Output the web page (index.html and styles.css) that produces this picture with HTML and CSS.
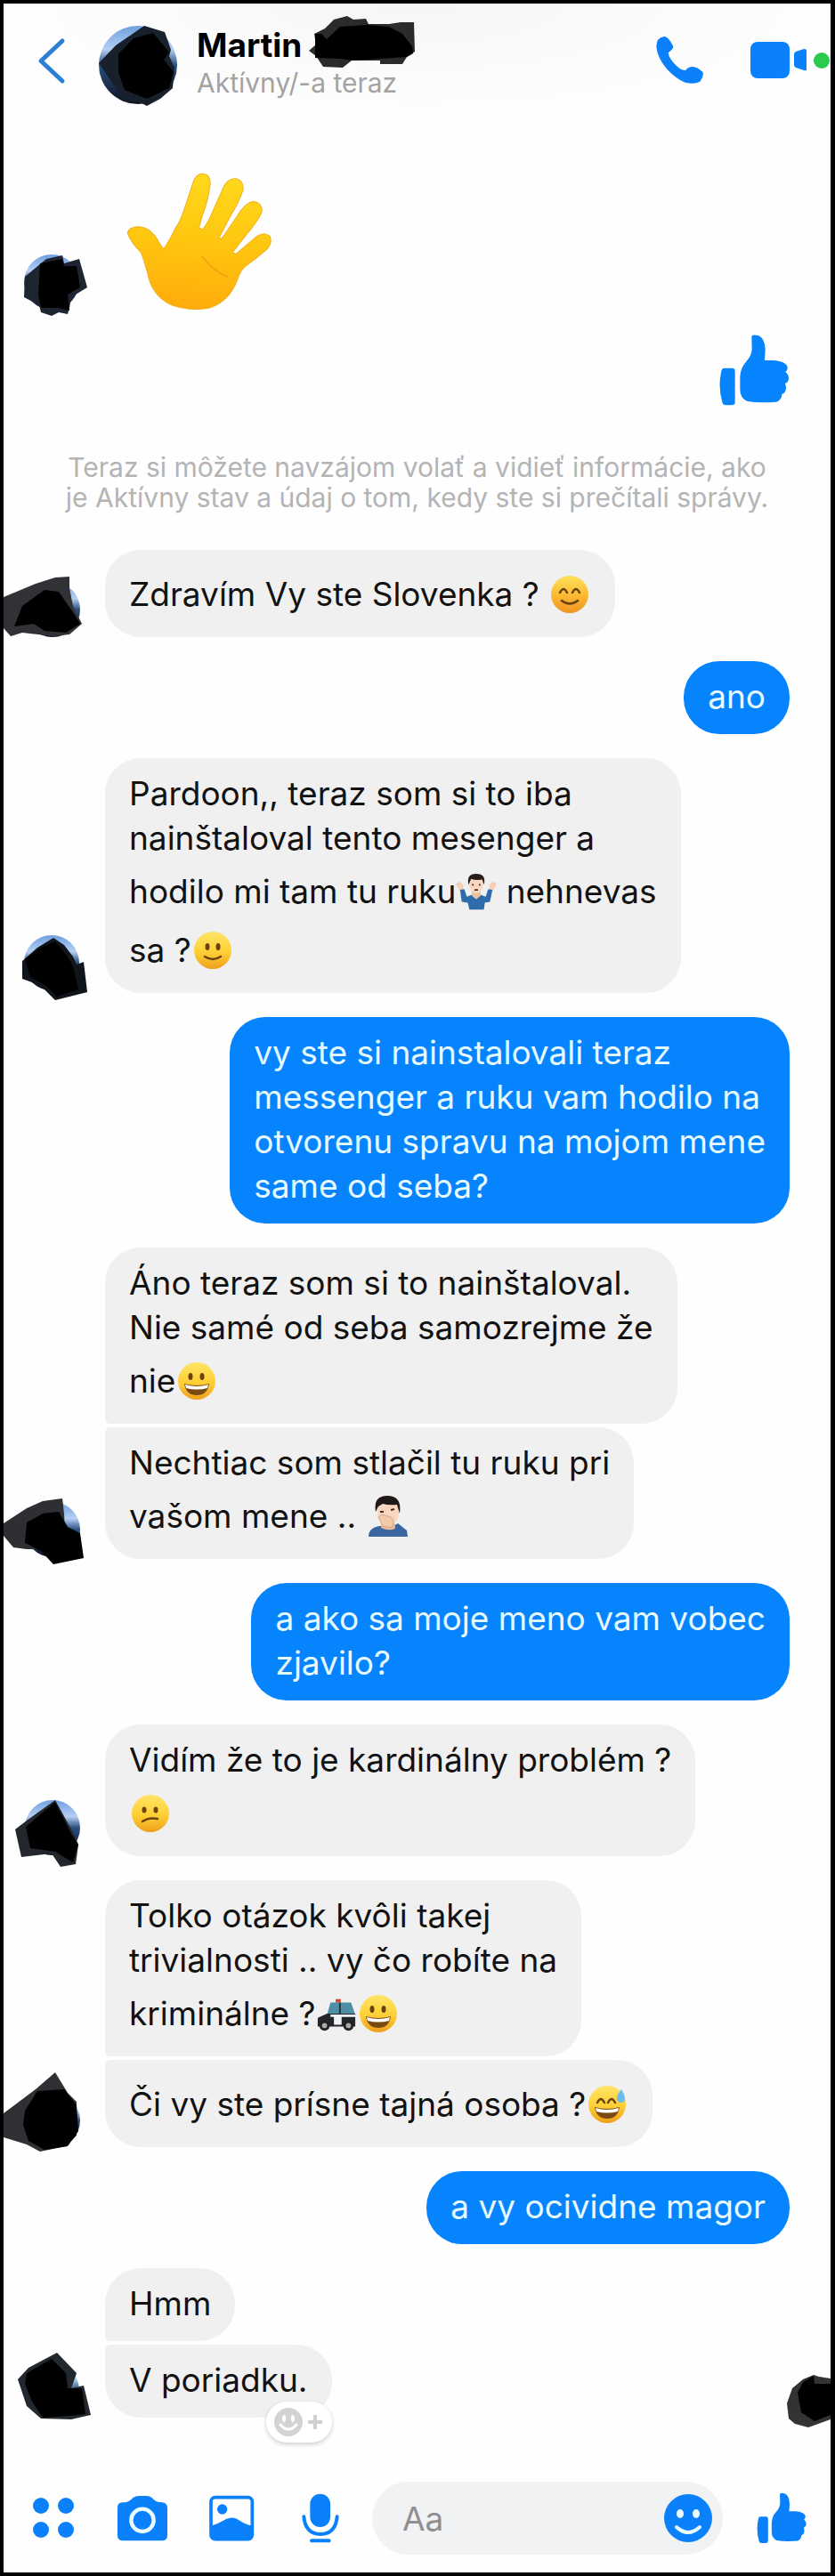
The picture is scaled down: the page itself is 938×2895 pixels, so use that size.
FILE: index.html
```html
<!DOCTYPE html>
<html lang="sk">
<head>
<meta charset="utf-8">
<meta name="viewport" content="width=device-width, initial-scale=1">
<title>Martin</title>
<link rel="stylesheet" href="styles.css">
</head>
<body>
<svg class="defs" aria-hidden="true">
  <defs>
    <linearGradient id="sky" x1="0" y1="0" x2="0" y2="1"><stop offset="0" stop-color="#6f9fe0"/><stop offset=".3" stop-color="#b5d0f2"/><stop offset=".5" stop-color="#2c4f80"/><stop offset="1" stop-color="#0c1220"/></linearGradient>
    <linearGradient id="skin" x1=".5" y1="0" x2=".4" y2="1"><stop offset="0" stop-color="#ffd91c"/><stop offset=".5" stop-color="#ffc60f"/><stop offset="1" stop-color="#ffab0c"/></linearGradient>
    <linearGradient id="face" x1="0" y1="0" x2="0" y2="1"><stop offset="0" stop-color="#ffe566"/><stop offset=".55" stop-color="#ffcf35"/><stop offset="1" stop-color="#eda01c"/></linearGradient>
    <linearGradient id="blush" x1="0" y1="0" x2="0" y2="1"><stop offset="0" stop-color="#ffe05a"/><stop offset=".5" stop-color="#fdbb35"/><stop offset="1" stop-color="#ee9420"/></linearGradient>
  </defs>
  <symbol id="like" viewBox="1014 1130 236 240">
    <path d="M1032 1243H1058Q1068 1243 1068 1253V1358Q1068 1368 1058 1368H1036Q1028 1368 1025 1358Q1010 1305 1022 1253Q1024 1243 1032 1243Z"/>
    <path d="M1124 1135Q1130 1128 1148 1134Q1168 1142 1170 1180L1168 1217H1200Q1245 1222 1245 1243Q1245 1252 1238 1256Q1250 1266 1249 1280Q1247 1292 1237 1295Q1242 1310 1238 1320Q1234 1330 1226 1331Q1226 1350 1208 1357Q1150 1362 1110 1355Q1085 1345 1085 1315V1270Q1088 1240 1105 1222Q1124 1200 1125 1180Z"/>
  </symbol>
  <symbol id="e-grin" viewBox="0 0 42 42">
    <circle cx="21" cy="21" r="21" fill="url(#face)"/>
    <ellipse cx="14" cy="16" rx="2.5" ry="4" fill="#6b4310"/><ellipse cx="27" cy="16" rx="2.5" ry="4" fill="#6b4310"/>
    <path d="M7 24Q21 28 35 24Q33 37 21 37Q9 37 7 24Z" fill="#7a4a12"/><path d="M8 25Q21 29 34 25L33 29Q21 32 9 29Z" fill="#fff"/>
  </symbol>
</svg>

<div class="app">
  <header class="header">
    <button class="icon-btn back" aria-label="Späť"><svg width="34" height="56" viewBox="41 41 34 56"><path d="M70 47 46 69.500 70 92" fill="none" stroke="#2b80d6" stroke-width="5" stroke-linecap="round" stroke-linejoin="round"/></svg></button>
    <svg class="photo" width="90" height="92" viewBox="111 27 90 92" role="img" aria-label="Martin">
      <circle cx="155" cy="72" r="44" fill="url(#sky)"/>
      <path fill="#18202b" d="M111 70 130 50 162 28 185 35 192 55 190 62 196 75 194 98 180 110 165 118 155 113 140 113 126 92Z"/>
      <path fill="#000" d="M133 60 150 42 172 36 182 48 190 58 184 66 195 80 190 98 165 110 140 100 133 80Z"/>
    </svg>
    <div class="who">
      <h1 class="name">Martin
        <svg class="scribble" width="119" height="58" viewBox="350 18 119 58" aria-hidden="true"><path fill="#2b2b2b" d="M350 57 358 50 356 38 368 32 378 22 393 18 400 22 414 21 417 27 440 27 453 25 468 25 469 58 460 64 455 72 430 72 430 68 398 68 388 76 366 75 358 63Z"/><path fill="#000" d="M357 38 364 38 370 44 385 30 415 28 440 30 455 38 466 52 467 60 460 64 430 66 400 68 384 66 357 65Z"/></svg>
      </h1>
      <p class="status">Aktívny/-a teraz</p>
    </div>
    <button class="icon-btn call" aria-label="Zavolať"><svg width="54" height="54" viewBox="807 129 162 162"><path fill="currentColor" d="M834 129Q850 130 865 163Q865 172 848 184Q850 205 880 232Q895 245 907 243Q912 232 931 231Q945 231 965 250Q968 265 955 281Q935 292 905 284Q870 270 840 235Q812 200 808 165Q808 132 834 129Z"/></svg></button>
    <button class="icon-btn" aria-label="Videohovor"><svg width="64" height="42" viewBox="843 49 64 42" fill="currentColor"><rect x="843" y="49" width="44" height="41" rx="8"/><path d="M892 63Q892 61 894 60L903 57Q906 57 906 59V80Q906 82 903 81L894 78Q892 77 892 75Z"/></svg></button>
    <span class="online"></span>
  </header>

  <main class="chat">
    <div class="row first">
      <svg class="avatar" viewBox="4 248 110 100" aria-hidden="true"><circle cx="58" cy="316" r="31" fill="url(#sky)"/><path fill="#1c2530" d="M27 333 28 310 52 290 70 286 72 295 89 290 98 322 80 333 78 345 76 352 66 350 58 354 46 350 44 342Z"/><path d="M45 295 70 290 72 298 86 298 90 322 76 330 78 348 66 345 46 345 43 330Z"/></svg>
      <svg class="wave" viewBox="429 585 485 460" role="img" aria-label="👋"><path fill="url(#skin)" stroke="#f0b020" stroke-width="3" d="M430 785Q432 765 465 763Q510 765 535 815L550 838Q560 830 590 770Q610 740 622 700L652 610Q662 583 685 585Q710 590 708 620Q700 680 680 730L670 768L683 772Q700 750 715 715Q735 670 755 625Q770 600 795 602Q822 610 818 640Q805 680 780 720L738 800L745 805Q770 770 800 725Q825 685 850 679Q880 680 882 708Q880 725 850 765Q820 800 783 850L795 855Q830 825 865 795Q890 780 908 795Q918 815 900 838Q870 865 835 890Q810 905 800 940Q770 1020 700 1038Q640 1048 580 1028Q520 1000 502 940Q490 890 475 850Q440 815 430 785Z"/><path d="M682 865Q715 910 765 932" fill="none" stroke="#f3a60f" stroke-width="6" stroke-linecap="round"/></svg>
    </div>
    <div class="row out like-row"><svg class="like-big" role="img" aria-label="Páči sa mi to"><use href="#like"/></svg></div>

    <p class="notice">Teraz si môžete navzájom volať a vidieť informácie, ako<br>je Aktívny stav a údaj o tom, kedy ste si prečítali správy.</p>

    <div class="row">
      <svg class="avatar" viewBox="4 615 110 100" aria-hidden="true"><circle cx="59" cy="684" r="31" fill="url(#sky)"/><path fill="#303236" d="M4 670 40 655 62 648 78 647 78 660 82 680 92 700 78 712 60 714 25 710 12 714 4 705Z"/><path d="M25 680 50 662 66 664 84 690 90 700 74 710 50 708 38 700 16 703Z"/></svg>
      <div class="stack"><p class="bubble">Zdravím Vy ste Slovenka ? <svg class="emoji" viewBox="0 0 42 42" role="img" aria-label="😊"><circle cx="21" cy="21" r="21" fill="url(#blush)"/><path d="M10 19Q14 11 18 19M24 19Q28 11 32 19M12 28Q21 35 30 28" fill="none" stroke="#6b4310" stroke-width="2.500" stroke-linecap="round"/></svg></p></div>
    </div>

    <div class="row out"><p class="bubble mine">ano</p></div>

    <div class="row">
      <svg class="avatar" viewBox="4 1016 110 100" aria-hidden="true"><circle cx="58" cy="1082" r="31" fill="url(#sky)"/><path fill="#10151c" d="M25 1080 42 1065 60 1054 72 1062 82 1075 86 1084 94 1081 98 1115 62 1124 50 1112 36 1104 25 1100Z"/><path d="M28 1078 46 1065 62 1058 76 1075 82 1086 88 1112 64 1120 52 1108 34 1098Z"/></svg>
      <div class="stack"><p class="bubble">Pardoon,, teraz som si to iba<br>nainštaloval tento mesenger a<br>hodilo mi tam tu ruku<svg class="emoji wide" viewBox="0 0 48 42" role="img" aria-label="🤷🏻‍♂️"><path d="M5 20 1 12 4 10 8 13 8 19M43 20 47 12 44 10 40 13 40 19" fill="#f6d2ba" stroke="#f0c3a6"/><path d="M5 19 10 18 13 27Q24 21 35 27L38 18 43 19 40 33 34 34 33 42H16L14 34 7 33Z" fill="#2f6cab"/><path d="M19 19H29V26L24 30 19 26Z" fill="#eec0a2"/><ellipse cx="24" cy="13" rx="8" ry="10" fill="#f8d8c2"/><path d="M15 13Q12 0 24 0Q36 0 33 13L31 7Q23 8 18 6Z" fill="#2b1d18"/><path d="M20 12V14M28 12V14M22 19H26" stroke="#4a2b20" stroke-width="2"/></svg> nehnevas<br>sa ?<svg class="emoji" viewBox="0 0 42 42" role="img" aria-label="🙂"><circle cx="21" cy="21" r="21" fill="url(#face)"/><ellipse cx="15" cy="17" rx="2.500" ry="4" fill="#6b4310"/><ellipse cx="27" cy="17" rx="2.500" ry="4" fill="#6b4310"/><path d="M12 28Q21 34 30 28" fill="none" stroke="#6b4310" stroke-width="2.500" stroke-linecap="round"/></svg></p></div>
    </div>

    <div class="row out"><p class="bubble mine">vy ste si nainstalovali teraz<br>messenger a ruku vam hodilo na<br>otvorenu spravu na mojom mene<br>same od seba?</p></div>

    <div class="row">
      <svg class="avatar" viewBox="4 1651 110 100" aria-hidden="true"><circle cx="59" cy="1718" r="31" fill="url(#sky)"/><path fill="#2d2f33" d="M4 1711 30 1694 48 1686 70 1683 72 1700 74 1740 30 1740 15 1738 4 1725Z"/><path d="M30 1710 48 1700 66 1698 76 1715 90 1722 94 1750 60 1757 46 1742 28 1733Z"/></svg>
      <div class="stack">
        <p class="bubble">Áno teraz som si to nainštaloval.<br>Nie samé od seba samozrejme že<br>nie<svg class="emoji" role="img" aria-label="😀"><use href="#e-grin"/></svg></p>
        <p class="bubble">Nechtiac som stlačil tu ruku pri<br>vašom mene .. <svg class="emoji tall" viewBox="0 0 46 46" role="img" aria-label="🤦🏻‍♂️"><path d="M1 46Q1 36 13 34L29 34 34 31 44 39 45 46Z" fill="#3a67a0"/><path d="M16 27H30L31 37Q23 40 15 36Z" fill="#e9b999"/><ellipse cx="23" cy="18" rx="12" ry="16" fill="#f7d7bf"/><path d="M9 18Q6 0 22 0Q39 0 36 20L33 10Q24 11 17 9L12 12Z" fill="#211917"/><path d="M14 18H18M26 16 30 15" stroke="#4a2b20" stroke-width="2"/><path d="M12 24 16 21 26 24Q32 29 26 36L17 34Z" fill="#f3c9ac" stroke="#d9a585"/></svg></p>
      </div>
    </div>

    <div class="row out"><p class="bubble mine">a ako sa moje meno vam vobec<br>zjavilo?</p></div>

    <div class="row">
      <svg class="avatar" viewBox="4 1985 110 100" aria-hidden="true"><circle cx="59" cy="2053" r="31" fill="url(#sky)"/><path fill="#23272d" d="M17 2055 30 2045 62 2022 84 2062 88 2072 85 2094 68 2097 58 2082 24 2086Z"/><path d="M29 2052 62 2024 80 2060 88 2072 82 2092 62 2080 34 2076Z"/></svg>
      <div class="stack"><p class="bubble">Vidím že to je kardinálny problém ?<br><svg class="emoji" viewBox="0 0 42 42" role="img" aria-label="😕"><circle cx="21" cy="21" r="21" fill="url(#face)"/><ellipse cx="14" cy="17" rx="2.500" ry="3.500" fill="#6b4310"/><ellipse cx="27" cy="17" rx="2.500" ry="3.500" fill="#6b4310"/><path d="M12 30Q19 25 29 27" fill="none" stroke="#6b4310" stroke-width="2.500" stroke-linecap="round"/></svg></p></div>
    </div>

    <div class="row">
      <svg class="avatar" viewBox="4 2313 110 100" aria-hidden="true"><circle cx="59" cy="2383" r="31" fill="url(#sky)"/><path fill="#2f3033" d="M4 2375 40 2348 62 2329 76 2352 86 2362 86 2400 74 2412 45 2418 30 2410 4 2402Z"/><path d="M28 2372 42 2350 72 2348 86 2366 88 2395 76 2412 50 2416 32 2406 26 2388Z"/></svg>
      <div class="stack">
        <p class="bubble">Tolko otázok kvôli takej<br>trivialnosti .. vy čo robíte na<br>kriminálne ?<svg class="emoji wide" viewBox="0 0 48 42" role="img" aria-label="🚓"><path d="M23 4H29V8H23Z" fill="#d8402f"/><path d="M13 22 17 8H41L46 22Z" fill="#4f8fa5"/><path d="M28 8V22" stroke="#24333a" stroke-width="2"/><path d="M2 26 13 21H46V36H2Z" fill="#23262b"/><path d="M17 22H46V25H17ZM21 25H30V34H21Z" fill="#f1f3f5"/><circle cx="10" cy="35" r="6" fill="#222"/><circle cx="10" cy="35" r="3" fill="#aaa"/><circle cx="38" cy="35" r="6" fill="#222"/><circle cx="38" cy="35" r="3" fill="#aaa"/></svg><svg class="emoji" role="img" aria-label="😀"><use href="#e-grin"/></svg></p>
        <p class="bubble">Či vy ste prísne tajná osoba ?<svg class="emoji" viewBox="0 0 42 42" role="img" aria-label="😅"><circle cx="21" cy="21" r="21" fill="url(#face)"/><path d="M10 19Q14 11 18 19M22 19Q26 11 30 19" fill="none" stroke="#6b4310" stroke-width="2.500" stroke-linecap="round"/><path d="M7 24Q21 28 35 24Q33 37 21 37Q9 37 7 24Z" fill="#7a4a12"/><path d="M8 25Q21 29 34 25L33 29Q21 32 9 29Z" fill="#fff"/><path d="M37 4Q43 14 40 18Q35 21 32 16Q31 11 37 4Z" fill="#6dbdeb"/></svg></p>
      </div>
    </div>

    <div class="row out"><p class="bubble mine">a vy ocividne magor</p></div>

    <div class="row last">
      <svg class="avatar" viewBox="4 2618 110 100" aria-hidden="true"><circle cx="58" cy="2687" r="31" fill="url(#sky)"/><path fill="#23272e" d="M20 2675 32 2662 64 2645 86 2668 80 2685 94 2682 102 2715 80 2720 46 2719 30 2705Z"/><path d="M30 2668 58 2652 74 2668 76 2685 92 2685 96 2714 78 2716 48 2718 36 2700 28 2680Z"/></svg>
      <div class="stack">
        <p class="bubble">Hmm</p>
        <div class="reactable">
          <p class="bubble">V poriadku.</p>
          <button class="react" aria-label="Pridať reakciu"><svg width="56" height="32" viewBox="0 0 56 32"><circle cx="16" cy="16" r="16" fill="#d3d3d3"/><ellipse cx="11" cy="12" rx="2" ry="4" fill="#fff"/><ellipse cx="21" cy="12" rx="2" ry="4" fill="#fff"/><path d="M7 19Q16 29 25 19" fill="none" stroke="#fff" stroke-width="3" stroke-linecap="round"/><path d="M46 8V24M38 16H54" stroke="#cfcfcf" stroke-width="4"/></svg></button>
        </div>
      </div>
      <svg class="receipt" width="49" height="59" viewBox="884 670 49 59" aria-hidden="true"><path fill="#333" d="M884 702 890 685 902 675 914 670 920 672 933 674V720L908 729 893 725 886 719Z"/><path d="M896 690 902 678 914 671 915 680H933V715L915 722 900 712Z"/></svg>
    </div>
  </main>

  <form class="composer">
    <button type="button" class="icon-btn" aria-label="Viac"><svg width="56" height="56" viewBox="32 2802 56 56" fill="currentColor"><circle cx="46" cy="2816" r="9"/><circle cx="74" cy="2816" r="9"/><circle cx="46" cy="2843" r="9"/><circle cx="74" cy="2843" r="9"/></svg></button>
    <button type="button" class="icon-btn" aria-label="Fotoaparát"><svg width="56" height="56" viewBox="398 126 168 168"><path fill="currentColor" d="M415 157Q435 157 445 146Q455 135 470 135H495Q510 135 520 147Q530 157 548 157Q566 158 566 176V268Q566 286 548 286H416Q398 286 398 268V174Q398 158 415 157Z"/><circle cx="482" cy="217" r="38" fill="none" stroke="#e9fbff" stroke-width="13"/></svg></button>
    <button type="button" class="icon-btn" aria-label="Galéria"><svg width="56" height="56" viewBox="698 126 168 168"><rect x="713" y="140" width="139" height="141" rx="14" fill="none" stroke="currentColor" stroke-width="11"/><circle cx="751" cy="180" r="17" fill="currentColor"/><path fill="currentColor" d="M713 236Q735 230 760 215Q785 202 805 215Q830 232 852 236V270Q852 281 840 281H725Q713 281 713 270Z"/></svg></button>
    <button type="button" class="icon-btn" aria-label="Hlasová správa"><svg width="56" height="56" viewBox="999 126 168 168"><rect x="1048" y="128" width="68" height="112" rx="34" fill="currentColor"/><path d="M1027 205Q1032 263 1083 264Q1134 263 1139 205M1053 286H1112" fill="none" stroke="currentColor" stroke-width="12" stroke-linecap="round"/></svg></button>
    <div class="field">
      <input class="input" type="text" placeholder="Aa" aria-label="Správa">
      <button type="button" class="icon-btn" aria-label="Emoji"><svg width="54" height="54" viewBox="0 0 54 54"><circle cx="27" cy="27" r="27" fill="currentColor"/><ellipse cx="18" cy="22" rx="4" ry="5" fill="#e9fbff"/><ellipse cx="36" cy="22" rx="4" ry="5" fill="#e9fbff"/><path d="M14 37Q27 49 40 37" fill="none" stroke="#e9fbff" stroke-width="4" stroke-linecap="round"/></svg></button>
    </div>
    <button type="button" class="icon-btn" aria-label="Páči sa mi to"><svg width="56" height="58"><use href="#like"/></svg></button>
  </form>
</div>
</body>
</html>
```
FILE: styles.css
```css
* { box-sizing: border-box; margin: 0; padding: 0; }

body {
  min-height: 100vh;
  padding: 4px 5px 4px 4px;
  display: flex;
  background: #000;
  color: #121212;
  font-family: Inter, "Liberation Sans", sans-serif;
}

button, input { font: inherit; border: 0; background: none; }
svg { display: block; flex: none; }
.defs { position: absolute; width: 0; height: 0; }

.app {
  flex: 1;
  min-width: 0;
  display: flex;
  flex-direction: column;
  background: #fefefe;
  overflow: hidden;
}

.icon-btn { color: #0a80fb; flex: none; }
.icon-btn svg { fill: currentColor; }

.header {
  display: flex;
  align-items: center;
  height: 127px;
  padding: 0 1px 0 37px;
  background: radial-gradient(ellipse at 50% 0, #f6f6f6, #fcfcfc 50%, #fefefe 75%);
}
.photo { margin-left: 36px; margin-top: 12px; }
.who { flex: 1; margin-left: 20px; padding-top: 6px; }
.name {
  display: flex;
  align-items: center;
  gap: 8px;
  height: 44px;
  font-size: 37px;
  line-height: 44px;
  font-weight: 700;
  color: #000;
}
.scribble { margin-bottom: 8px; }
.status { font-size: 30px; line-height: 40px; color: #a3a3a3; }
.call { margin-right: 52px; }
.online {
  width: 18px;
  height: 18px;
  margin-left: 7px;
  border-radius: 50%;
  background: #2bcb4c;
}

.chat {
  flex: 1;
  display: flex;
  flex-direction: column;
  gap: 27px;
  padding: 64px 0 71px;
}
.row { display: flex; align-items: flex-end; position: relative; }
.out { justify-content: flex-end; padding-right: 46px; }
.avatar { width: 110px; height: 100px; margin-right: 4px; overflow: visible; }
.wave { width: 162px; height: 154px; margin-left: 25px; overflow: visible; }
.like-big { width: 80px; height: 80px; fill: #0584fe; }

.notice {
  margin: 25px 0 13px;
  text-align: center;
  font-size: 30px;
  line-height: 34px;
  color: #b4b4b4;
}

.stack { display: flex; flex-direction: column; align-items: flex-start; gap: 4px; }
.bubble {
  padding: 15px 27px 17px;
  border-radius: 40px;
  background: #f0f0f0;
  font-size: 37px;
  line-height: 50px;
  white-space: nowrap;
}
.mine { background: #0584fe; color: #e6faff; }
.stack > :not(:last-child) { border-bottom-left-radius: 6px; }
.stack > :not(:first-child), .stack > :not(:first-child) .bubble { border-top-left-radius: 6px; }

.emoji {
  display: inline-block;
  width: 42px;
  height: 42px;
  margin: 14px 3px 10px;
  vertical-align: -18px;
}
.wide { width: 46px; margin-left: 0; margin-right: 0; }
.tall { width: 46px; height: 46px; }
.tall { margin-top: 12px; margin-bottom: 8px; }

.reactable { position: relative; }
.react {
  position: absolute;
  right: 0;
  bottom: -28px;
  display: flex;
  align-items: center;
  height: 46px;
  padding: 0 9px;
  border-radius: 23px;
  background: #fff;
  box-shadow: 0 2px 5px rgba(0, 0, 0, .2);
}
.receipt { position: absolute; right: 0; bottom: -11px; }

.composer {
  display: flex;
  align-items: center;
  gap: 44px;
  padding: 0 27px 20px 28px;
}
.field {
  flex: 1;
  min-width: 0;
  display: flex;
  align-items: center;
  height: 82px;
  margin: 0 -6px 0 -14px;
  padding: 0 12px 0 34px;
  border-radius: 41px;
  background: #f1f2f4;
}
.input { flex: 1; min-width: 0; font-size: 37px; outline: 0; }
.input::placeholder { color: #8f8f92; opacity: 1; }
```
